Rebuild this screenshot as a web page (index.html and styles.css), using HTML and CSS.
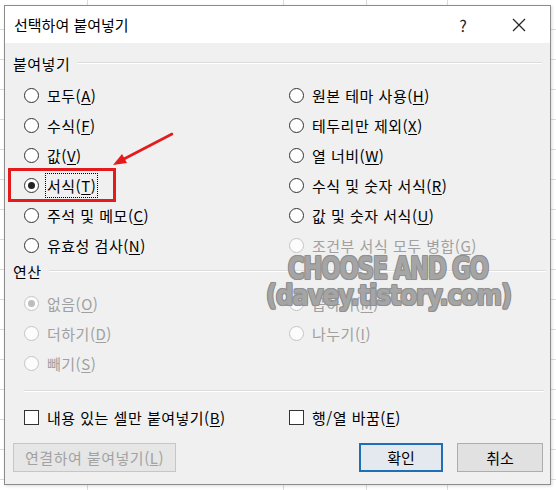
FILE: index.html
```html
<!DOCTYPE html>
<html lang="ko">
<head>
<meta charset="utf-8">
<title>선택하여 붙여넣기</title>
<link rel="stylesheet" href="styles.css">
</head>
<body>
<div class="dialog">
  <div class="titlebar">
    <span class="title">선택하여 붙여넣기</span>
    <span class="help">?</span>
    <span class="close"><svg width="14" height="14" viewBox="0 0 14 14"><path d="M1 1L13 13M13 1L1 13" stroke="#222" stroke-width="1.2" fill="none"/></svg></span>
  </div>
  <div class="content">
    <div class="group-head"><span>붙여넣기</span><i class="rule"></i></div>
    <div class="options paste">
      <div class="opt"><span class="radio"></span><span>모두(<u>A</u>)</span></div>
      <div class="opt"><span class="radio"></span><span>수식(<u>F</u>)</span></div>
      <div class="opt"><span class="radio"></span><span>값(<u>V</u>)</span></div>
      <div class="opt"><span class="radio checked"></span><span class="focus">서식(<u>T</u>)</span></div>
      <div class="opt"><span class="radio"></span><span>주석 및 메모(<u>C</u>)</span></div>
      <div class="opt"><span class="radio"></span><span>유효성 검사(<u>N</u>)</span></div>
      <div class="opt"><span class="radio"></span><span>원본 테마 사용(<u>H</u>)</span></div>
      <div class="opt"><span class="radio"></span><span>테두리만 제외(<u>X</u>)</span></div>
      <div class="opt"><span class="radio"></span><span>열 너비(<u>W</u>)</span></div>
      <div class="opt"><span class="radio"></span><span>수식 및 숫자 서식(<u>R</u>)</span></div>
      <div class="opt"><span class="radio"></span><span>값 및 숫자 서식(<u>U</u>)</span></div>
      <div class="opt disabled"><span class="radio"></span><span>조건부 서식 모두 병합(<u>G</u>)</span></div>
    </div>
    <div class="group-head op-head"><span>연산</span><i class="rule"></i></div>
    <div class="options ops">
      <div class="opt disabled"><span class="radio checked"></span><span>없음(<u>O</u>)</span></div>
      <div class="opt disabled"><span class="radio"></span><span>더하기(<u>D</u>)</span></div>
      <div class="opt disabled"><span class="radio"></span><span>빼기(<u>S</u>)</span></div>
      <div class="opt disabled"><span class="radio"></span><span>곱하기(<u>M</u>)</span></div>
      <div class="opt disabled"><span class="radio"></span><span>나누기(<u>I</u>)</span></div>
    </div>
    <div class="separator"></div>
    <div class="checks">
      <div class="opt"><span class="checkbox"></span><span>내용 있는 셀만 붙여넣기(<u>B</u>)</span></div>
      <div class="opt"><span class="checkbox"></span><span>행/열 바꿈(<u>E</u>)</span></div>
    </div>
    <div class="buttons">
      <span class="btn btn-link">연결하여 붙여넣기(<u>L</u>)</span>
      <span class="spacer"></span>
      <span class="btn btn-ok">확인</span>
      <span class="btn btn-cancel">취소</span>
    </div>
  </div>
</div>

<div class="annot-box"></div>
<svg class="annot-arrow" width="70" height="45" viewBox="0 0 70 45">
  <line x1="62" y1="3" x2="12" y2="29" stroke="#e31b1d" stroke-width="2.6" stroke-linecap="round"/>
  <polygon points="3,34 12,23 17,32" fill="#e31b1d"/>
</svg>
<div class="watermark">
  <span class="wm1">CHOOSE AND GO</span>
  <span class="wm2">(davey.tistory.com)</span>
</div>
</body>
</html>
```

FILE: styles.css
```css
html, body {
  margin: 0;
  padding: 0;
}
body {
  width: 556px;
  height: 490px;
  overflow: hidden;
  position: relative;
  background-color: #ffffff;
  background-image:
    linear-gradient(to right, transparent 87px, #dcdcdc 87px, #dcdcdc 88px, transparent 88px),
    linear-gradient(to right, transparent 283px, #dcdcdc 283px, #dcdcdc 284px, transparent 284px),
    linear-gradient(to right, transparent 366px, #dcdcdc 366px, #dcdcdc 367px, transparent 367px),
    linear-gradient(to right, transparent 447px, #dcdcdc 447px, #dcdcdc 448px, transparent 448px),
    repeating-linear-gradient(to bottom, transparent 0, transparent 29px, #dcdcdc 29px, #dcdcdc 30px);
  font-family: "Noto Sans CJK KR", "Noto Sans", sans-serif;
  color: #000;
}

.dialog {
  box-sizing: border-box;
  width: 547px;
  height: 480px;
  margin: 5px 0 0 4px;
  border: 1px solid #8c8c8c;
  background: #f0f0f0;
  box-shadow: 1px 1px 3px rgba(0,0,0,0.15);
  display: flex;
  flex-direction: column;
}

.titlebar {
  height: 37px;
  background: #ffffff;
  display: flex;
  align-items: center;
  padding: 0 24px 0 9px;
  flex: none;
}
.title {
  font-size: 15px;
}
.help {
  margin-left: auto;
  width: 20px;
  text-align: center;
  font-size: 16px;
  color: #222;
}
.close {
  margin-left: 39px;
  display: flex;
}

.content {
  display: flex;
  flex-direction: column;
  font-size: 15px;
  letter-spacing: 0.5px;
}

.group-head {
  height: 20px;
  margin-top: 10px;
  padding-left: 8px;
  padding-right: 8px;
  display: flex;
  align-items: center;
  gap: 7px;
}
.rule {
  flex: 1;
  height: 1px;
  background: #dcdcdc;
  border-bottom: 1px solid #ffffff;
}
.op-head {
  margin-top: 1px;
  padding-right: 4px;
}

.options {
  display: grid;
  grid-template-columns: 265px 1fr;
  grid-auto-flow: column;
  padding-left: 19px;
  margin-top: 7px;
}
.paste {
  grid-template-rows: repeat(6, 30px);
}
.ops {
  grid-template-rows: repeat(3, 30px);
}

.opt {
  display: flex;
  align-items: center;
  gap: 8px;
  white-space: nowrap;
}
.opt u {
  text-underline-offset: 2px;
}

.radio {
  box-sizing: border-box;
  width: 15px;
  height: 15px;
  border-radius: 50%;
  border: 1px solid #333;
  background: #fff;
  display: flex;
  align-items: center;
  justify-content: center;
  flex: none;
}
.radio.checked::after {
  content: "";
  width: 7px;
  height: 7px;
  border-radius: 50%;
  background: #222;
}
.disabled {
  color: #a0a0a0;
}
.disabled .radio {
  border-color: #c4c4c4;
  background: #fcfcfc;
}
.disabled .radio.checked::after {
  background: #bdbdbd;
}

.focus {
  outline: 1px dotted #000;
  outline-offset: 1px;
}

.separator {
  margin: 12px 6px 0 19px;
  height: 1px;
  background: #dadada;
  border-bottom: 1px solid #fff;
}

.checks {
  display: grid;
  grid-template-columns: 265px 1fr;
  padding-left: 19px;
  height: 30px;
  margin-top: 10px;
}
.checkbox {
  box-sizing: border-box;
  width: 15px;
  height: 15px;
  border: 1px solid #333;
  background: #fff;
  flex: none;
}

.buttons {
  display: flex;
  align-items: center;
  padding: 0 7px 0 8px;
  margin-top: 11px;
  gap: 14px;
  letter-spacing: 0;
}
.spacer {
  flex: 1;
}
.btn {
  box-sizing: border-box;
  height: 29px;
  display: flex;
  align-items: center;
  justify-content: center;
  font-size: 15px;
  background: #e1e1e1;
  border: 1px solid #adadad;
}
.btn-link {
  width: 163px;
  color: #a2a2a2;
  background: #e6e6e6;
  border-color: #c6c6c6;
  letter-spacing: 0.5px;
}
.btn-ok {
  width: 84px;
  border: 2px solid #1e6fb5;
  background: #e3e9ef;
}
.btn-cancel {
  width: 86px;
}

.annot-box {
  position: absolute;
  left: 8px;
  top: 168px;
  width: 108px;
  height: 34px;
  box-sizing: border-box;
  border: 3px solid #e31b1d;
}
.annot-arrow {
  position: absolute;
  left: 110px;
  top: 131px;
}

.watermark {
  position: absolute;
  left: 232px;
  top: 252px;
  width: 312px;
  display: flex;
  flex-direction: column;
  align-items: center;
  font-family: "DejaVu Sans", sans-serif;
  font-weight: bold;
  color: rgba(168,168,168,0.92);
  text-shadow:
    1px 0 0 #909090, -1px 0 0 #909090, 0 1px 0 #909090, 0 -1px 0 #909090,
    1px 1px 0 #909090, -1px -1px 0 #909090, 1px -1px 0 #909090, -1px 1px 0 #909090,
    0 0 2px rgba(120,120,120,0.6);
  line-height: 1;
  pointer-events: none;
  white-space: nowrap;
}
.wm1 {
  font-size: 32px;
  letter-spacing: -2px;
  transform: scale(0.72, 1.0);
}
.wm2 {
  font-size: 30px;
  letter-spacing: -1.5px;
  transform: scale(0.82, 0.92);
  margin-top: -3px;
}
```
